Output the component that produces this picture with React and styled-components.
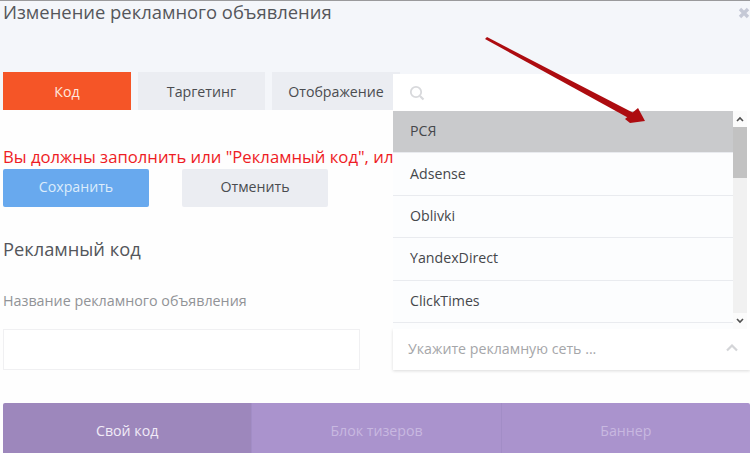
import React from "react";
import styled, { createGlobalStyle } from "styled-components";

const Global = createGlobalStyle`
  html, body {
    margin: 0;
    padding: 0;
    background: #ffffff;
    overflow: hidden;
  }
  * {
    box-sizing: border-box;
  }
`;

const Page = styled.div`
  position: relative;
  width: 750px;
  height: 453px;
  overflow: hidden;
  background: #fefefe;
  border-top: 1px solid #9a9a9c;
  font-family: "Open Sans", "Noto Sans", sans-serif;
  color: #4a4c50;
`;

const Header = styled.div`
  display: flex;
  justify-content: space-between;
  height: 71px;
  padding: 0 3px;
  background: #f4f6fa;
`;

const Title = styled.h1`
  margin: -1px 0 0;
  font-size: 18.4px;
  font-weight: 400;
  line-height: 24px;
  color: #54565b;
`;

const Close = styled.svg`
  width: 12px;
  height: 12px;
  margin-top: 6px;
  margin-right: -3px;
`;

const Tabs = styled.div`
  display: flex;
  gap: 7px;
  padding: 0 3px;
  background: linear-gradient(#f4f6fa 0, #f4f6fa 38px, transparent 38px);
`;

const Tab = styled.div`
  display: flex;
  align-items: center;
  justify-content: center;
  width: ${(p) => p.$w}px;
  height: 38px;
  font-size: 14.2px;
  background: ${(p) => (p.$active ? "#f55527" : "#ebedf2")};
  color: ${(p) => (p.$active ? "#ffe9df" : "#4a4c50")};
`;

const ErrorText = styled.div`
  margin-top: 35px;
  padding-left: 3px;
  font-size: 16.7px;
  line-height: 24px;
  color: #ee1c25;
  white-space: nowrap;
`;

const Actions = styled.div`
  display: flex;
  gap: 33px;
  padding: 0 3px;
`;

const Button = styled.div`
  display: flex;
  align-items: center;
  justify-content: center;
  width: 146px;
  height: 38px;
  padding-bottom: 3px;
  border-radius: 2px;
  font-size: 14.2px;
  background: ${(p) => (p.$primary ? "#68a9ee" : "#ebedf2")};
  color: ${(p) => (p.$primary ? "#dcecfb" : "#4a4c50")};
`;

const Heading = styled.h2`
  margin: 30px 0 0;
  padding-left: 3px;
  font-size: 18.3px;
  font-weight: 400;
  line-height: 24px;
  color: #54565b;
`;

const Label = styled.div`
  margin-top: 30px;
  padding-left: 3px;
  font-size: 14.3px;
  line-height: 20px;
  color: #919397;
`;

const FieldRow = styled.div`
  display: flex;
  gap: 33px;
  margin-top: 18px;
  padding-left: 3px;
`;

const Input = styled.div`
  width: 357px;
  height: 41px;
  background: #ffffff;
  border: 1px solid #f0f0f2;
`;

const Trigger = styled.div`
  display: flex;
  align-items: center;
  justify-content: space-between;
  width: 357px;
  height: 41px;
  padding: 0 12px 3px 15px;
  background: #ffffff;
  box-shadow: 0 1px 3px rgba(0, 0, 0, 0.14);
  font-size: 14.2px;
  color: #a5a6a9;
`;

const BottomTabs = styled.div`
  display: flex;
  margin: 33px 0 0 3px;
  border-radius: 2px 2px 0 0;
  overflow: hidden;
`;

const BottomTab = styled.div`
  display: flex;
  align-items: center;
  justify-content: center;
  flex: 1;
  height: 56px;
  padding-bottom: 2px;
  font-size: 14.2px;
  border-left: ${(p) => (p.$first ? "none" : "1px solid #a28dc6")};
  background: ${(p) => (p.$active ? "#9d87bc" : "#aa93cd")};
  color: ${(p) => (p.$active ? "#f1ebf7" : "#c8b8e0")};
`;

const Dropdown = styled.div`
  position: absolute;
  left: 393px;
  top: 73px;
  width: 357px;
  background: #ffffff;
`;

const Search = styled.div`
  display: flex;
  align-items: center;
  height: 37px;
  padding-left: 16px;
`;

const ListWrap = styled.div`
  display: flex;
  height: 218px;
`;

const List = styled.div`
  flex: 1;
  overflow: hidden;
  background: #fcfdfe;
`;

const Item = styled.div`
  display: flex;
  align-items: center;
  height: 42.4px;
  padding: 0 0 2px 17px;
  font-size: 14.2px;
  border-bottom: 1px solid #e9ebef;
  background: ${(p) => (p.$active ? "#c9cacc" : "transparent")};
  color: #45474b;
`;

const Scrollbar = styled.div`
  display: flex;
  flex-direction: column;
  align-items: center;
  width: 14px;
  margin-right: 3px;
  background: #f1f1f1;
`;

const ScrollButton = styled.div`
  display: flex;
  align-items: center;
  justify-content: center;
  width: 100%;
  height: 16px;
  background: #fbfbfb;
`;

const Thumb = styled.div`
  width: 100%;
  height: 51px;
  background: #c2c2c2;
`;

const Track = styled.div`
  flex: 1;
`;

const Arrow = styled.svg`
  position: absolute;
  left: 480px;
  top: 30px;
  width: 175px;
  height: 100px;
  pointer-events: none;
`;

const items = ["РСЯ", "Adsense", "Oblivki", "YandexDirect", "ClickTimes"];

export default function App() {
  return (
    <Page>
      <Global />
      <Header>
        <Title>Изменение рекламного объявления</Title>
        <Close viewBox="0 0 12 12">
          <path d="M2 2l8 8M10 2l-8 8" stroke="#c5c9d6" strokeWidth="3.4" fill="none" />
        </Close>
      </Header>
      <Tabs>
        <Tab $w={128} $active>Код</Tab>
        <Tab $w={127}>Таргетинг</Tab>
        <Tab $w={128}>Отображение</Tab>
      </Tabs>
      <ErrorText>Вы должны заполнить или "Рекламный код", или</ErrorText>
      <Actions>
        <Button $primary>Сохранить</Button>
        <Button>Отменить</Button>
      </Actions>
      <Heading>Рекламный код</Heading>
      <Label>Название рекламного объявления</Label>
      <FieldRow>
        <Input />
        <Trigger>
          Укажите рекламную сеть ...
          <svg width="12" height="8" viewBox="0 0 12 8">
            <path d="M1 6.5l5-5 5 5" stroke="#d4d5d8" strokeWidth="2.2" fill="none" />
          </svg>
        </Trigger>
      </FieldRow>
      <BottomTabs>
        <BottomTab $active $first>Свой код</BottomTab>
        <BottomTab>Блок тизеров</BottomTab>
        <BottomTab>Баннер</BottomTab>
      </BottomTabs>
      <Dropdown>
        <Search>
          <svg width="16" height="16" viewBox="0 0 16 16">
            <circle cx="7" cy="7" r="5.2" stroke="#d8d9dc" strokeWidth="1.8" fill="none" />
            <path d="M11 11l3.5 3.5" stroke="#d8d9dc" strokeWidth="2.2" />
          </svg>
        </Search>
        <ListWrap>
          <List>
            {items.map((name, i) => (
              <Item key={name} $active={i === 0}>{name}</Item>
            ))}
          </List>
          <Scrollbar>
            <ScrollButton>
              <svg width="8" height="6" viewBox="0 0 8 6">
                <path d="M1 5l3-3 3 3" stroke="#505050" strokeWidth="1.6" fill="none" />
              </svg>
            </ScrollButton>
            <Thumb />
            <Track />
            <ScrollButton>
              <svg width="8" height="6" viewBox="0 0 8 6">
                <path d="M1 1l3 3 3-3" stroke="#505050" strokeWidth="1.6" fill="none" />
              </svg>
            </ScrollButton>
          </Scrollbar>
        </ListWrap>
      </Dropdown>
      <Arrow viewBox="0 0 175 100">
        <polygon points="5,8 7,6 153.6,82 150.4,88" fill="#ad0c10" />
        <polygon points="165,90 150,92 145,88 158,77" fill="#ad0c10" />
      </Arrow>
    </Page>
  );
}
